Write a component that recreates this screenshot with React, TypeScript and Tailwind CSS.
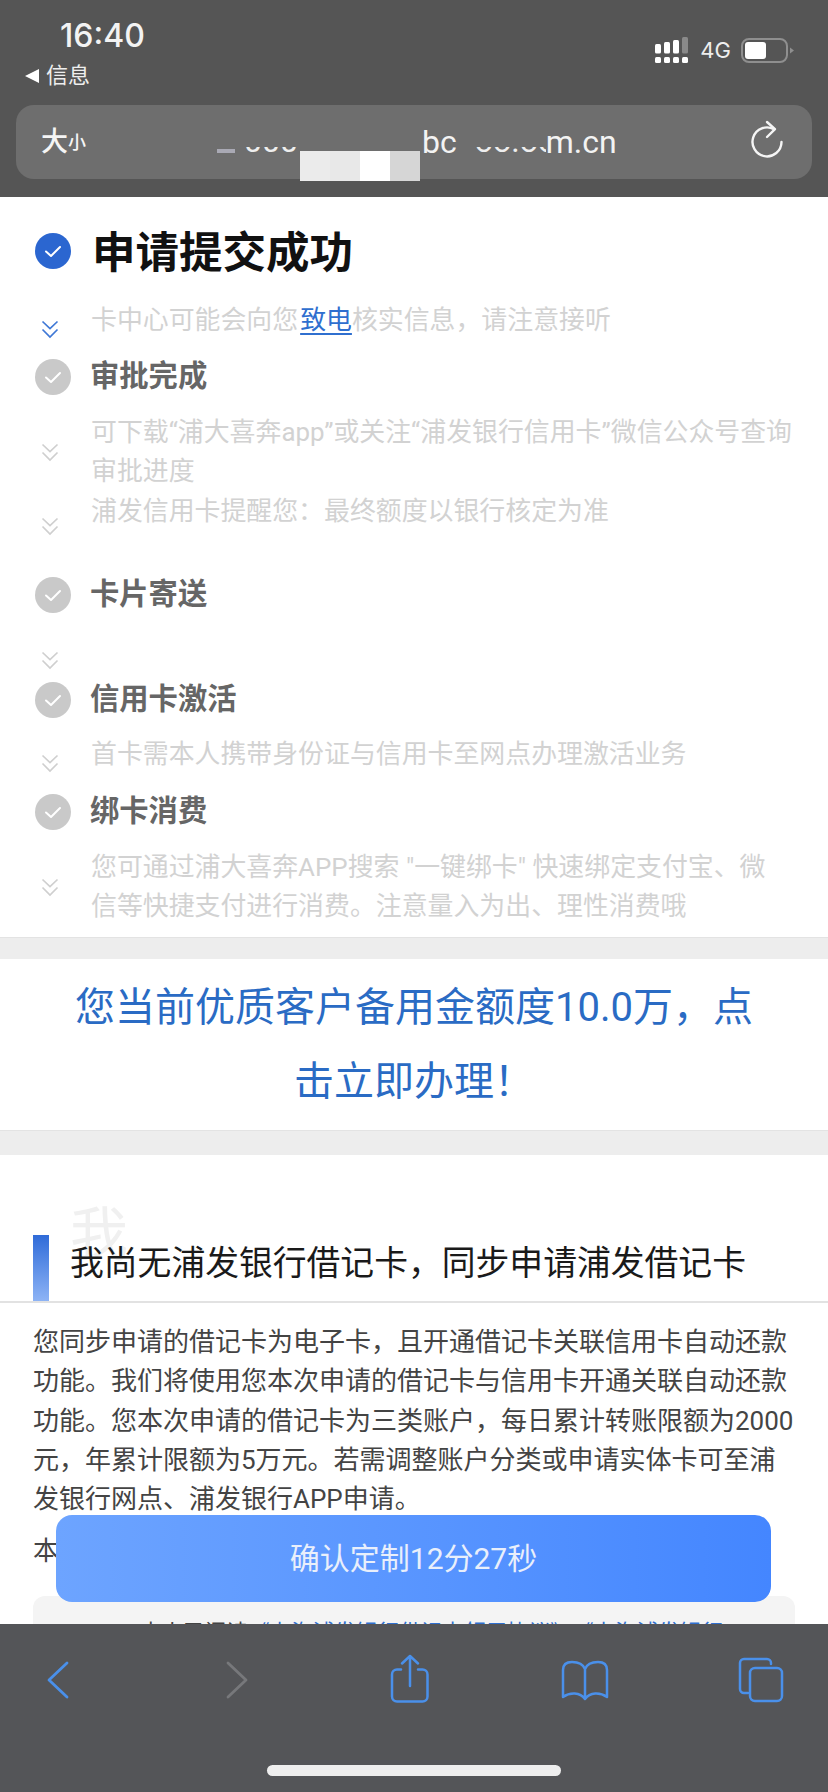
import React from "react";

const Check = ({ bg, size = 36 }: { bg: string; size?: number }) => (
  <svg width={size} height={size} viewBox="0 0 36 36" className="shrink-0">
    <circle cx="18" cy="18" r="18" fill={bg} />
    <path d="M11 18.500l5 4.500 9-9" fill="none" stroke="#fff" strokeWidth="2" strokeLinecap="round" strokeLinejoin="round" />
  </svg>
);

const Chev = ({ color = "#cfcfcf" }: { color?: string }) => (
  <svg width="18" height="19" viewBox="0 0 18 19" className="block">
    <path d="M1.500 1.500L9 8.500l7.500-7M1.500 9.500L9 17l7.500-7.500" fill="none" stroke={color} strokeWidth="1.700" />
  </svg>
);

const Title = ({ text, mt }: { text: string; mt: string }) => (
  <div className={`flex h-10 items-center pl-[35px] ${mt}`}>
    <Check bg="#c9c9c9" />
    <div className="ml-[19px] text-[29.300px] font-bold text-[#666666]">{text}</div>
  </div>
);

const Clipped = ({ text, className }: { text: string; className: string }) => (
  <div className={`h-[6px] overflow-hidden whitespace-nowrap ${className}`}>
    <div className="-mt-[22px] text-[32px] leading-[32px] text-[#eeeeee]">{text}</div>
  </div>
);

export default function App() {
  return (
    <div className="relative flex h-[1792px] w-[828px] flex-col overflow-hidden bg-white font-['Roboto','Noto_Sans_CJK_SC',sans-serif]">
      {/* Safari header */}
      <header className="relative z-10 h-[197px] shrink-0 bg-[#555555] px-4 text-white">
        <div className="flex h-[105px] justify-between">
          <div className="pl-[9px]">
            <div className="ml-[35px] pt-[15px] font-['Inter','Noto_Sans_CJK_SC',sans-serif] text-[32px] font-medium leading-[42px] text-[#f3f3f3]">16:40</div>
            <div className="mt-[7px] flex items-center gap-[7px] text-[22px] leading-[24px] text-[#eeeeee]">
              <span className="h-0 w-0 border-y-[7px] border-r-[14px] border-y-transparent border-r-white" />
              信息
            </div>
          </div>
          <div className="flex items-start pr-[17px] pt-[37px]">
            <svg width="34" height="26" viewBox="0 0 34 26" className="mr-[11px]">
              <g fill="#fff">
                <rect x="0" y="7" width="6" height="9.500" rx="1.500" />
                <rect x="9" y="5" width="6" height="11.500" rx="1.500" />
                <rect x="18" y="3" width="6" height="13.500" rx="1.500" />
                <rect x="0" y="20" width="6" height="6" rx="1.500" />
                <rect x="9" y="20" width="6" height="6" rx="1.500" />
                <rect x="18" y="20" width="6" height="6" rx="1.500" />
                <rect x="27" y="20" width="6" height="6" rx="1.500" />
              </g>
              <rect x="27" y="0" width="6" height="16.500" rx="1.500" fill="#8a8a8a" />
            </svg>
            <div className="mr-[10px] mt-[-3px] font-['Inter',sans-serif] text-[22px] leading-[32px] text-[#eeeeee]">4G</div>
            <svg width="54" height="26" viewBox="0 0 54 26">
              <rect x="1" y="2" width="45" height="23" rx="7" fill="none" stroke="#8f8f8f" strokeWidth="2" />
              <rect x="4" y="5" width="21" height="17" rx="3" fill="#fff" />
              <path d="M49 10.500l4 3-4 3z" fill="#8f8f8f" />
            </svg>
          </div>
        </div>
        <div className="relative flex h-[74px] items-center rounded-[18px] bg-[#6e6e6e] pl-[25px]">
          <span className="text-[27px] font-medium text-[#f5f5f5]">大</span>
          <span className="text-[18px] font-medium text-[#f5f5f5]">小</span>
          <div className="ml-[131px] mt-[18px] h-[4px] w-[18px] shrink-0 bg-[#a9a9b4]" />
          <Clipped text="000" className="ml-[9px] mt-[16px] w-[58px]" />
          <span className="ml-[120px] text-[32px] text-[#f3f3f3]">bc</span>
          <Clipped text="oo.oo" className="ml-[18px] mt-[16px] w-[71px]" />
          <span className="text-[32px] text-[#f3f3f3]">m.cn</span>
          <svg width="34" height="40" viewBox="0 0 34 40" className="absolute left-[734px] top-[15px]" fill="none" stroke="#f5f5f5" strokeWidth="2.400" strokeLinecap="round" strokeLinejoin="round">
            <path d="M31.500 22A14.500 14.500 0 1 1 24 9.200" />
            <path d="M17 2l8 7.200-8 7.800" />
          </svg>
          <div className="absolute left-[284px] top-[46px] flex h-[30px] w-[120px]">
            <span className="w-[30px] bg-[#ebebeb]" />
            <span className="w-[30px] bg-[#e8e8e8]" />
            <span className="w-[30px] bg-white" />
            <span className="w-[30px] bg-[#d6d6d6]" />
          </div>
        </div>
      </header>

      {/* Page */}
      <main className="relative min-h-0 flex-1 overflow-hidden bg-white">
        <section className="h-[741px] border-b border-[#e3e3e3] pt-[27px]">
          <div className="flex h-[54px] items-center pl-[35px]">
            <Check bg="#2b66d0" />
            <div className="ml-[21px] mt-[6px] text-[43.500px] font-bold leading-[54px] text-[#111111]">申请提交成功</div>
          </div>
          <div className="mt-[22px] flex h-10 items-center whitespace-nowrap">
            <div className="ml-[41px] mt-[18px] w-[50px]"><Chev color="#3f78d6" /></div>
            <div className="text-[25.900px] leading-10 text-[#d2d2d2]">
              卡中心可能会向您<span className="ml-[2px] text-[#2f6fcf] underline underline-offset-4">致电</span>核实信息，请注意接听
            </div>
          </div>
          <Title text="审批完成" mt="mt-[17px]" />
          <div className="mt-[15.500px] flex items-center whitespace-nowrap">
            <div className="ml-[41px] w-[50px]"><Chev /></div>
            <div className="text-[25.900px] leading-[39.500px] text-[#d2d2d2]">
              <div>可下载“浦大喜奔app”或关注“浦发银行信用卡”微信公众号查询</div>
              <div>审批进度</div>
            </div>
          </div>
          <div className="flex h-[39.500px] items-center whitespace-nowrap">
            <div className="ml-[41px] mt-[30px] w-[50px]"><Chev /></div>
            <div className="text-[25.900px] leading-[39.500px] text-[#d2d2d2]">浦发信用卡提醒您：最终额度以银行核定为准</div>
          </div>
          <Title text="卡片寄送" mt="mt-[44px]" />
          <div className="ml-[41px] mt-[36px] h-[19px]"><Chev /></div>
          <Title text="信用卡激活" mt="mt-[10px]" />
          <div className="mt-[15px] flex h-[39px] items-center whitespace-nowrap">
            <div className="ml-[41px] mt-[18px] w-[50px]"><Chev /></div>
            <div className="text-[25.900px] leading-[39px] text-[#d2d2d2]">首卡需本人携带身份证与信用卡至网点办理激活业务</div>
          </div>
          <Title text="绑卡消费" mt="mt-[18px]" />
          <div className="mt-[16px] flex items-center whitespace-nowrap">
            <div className="ml-[41px] w-[50px]"><Chev /></div>
            <div className="text-[25.900px] leading-[39px] text-[#d2d2d2]">
              <div>您可通过浦大喜奔APP搜索 "一键绑卡" 快速绑定支付宝、微</div>
              <div>信等快捷支付进行消费。注意量入为出、理性消费哦</div>
            </div>
          </div>
        </section>

        <div className="h-[21px] bg-[#ededed]" />
        <section className="flex h-[172px] flex-col items-center justify-center border-b border-[#e3e3e3] text-[40px] leading-[74px] text-[#2a6bc4]">
          <div>您当前优质客户备用金额度10.0万，点</div>
          <div>击立即办理！</div>
        </section>
        <div className="h-[24px] bg-[#ededed]" />

        <section className="relative">
          <div className="pl-[33px]">
            <div className="relative flex h-[146px] items-end">
              <div className="absolute left-[37px] top-[45px] text-[58px] leading-[70px] text-[#f0f0f0]">我</div>
              <div className="h-[66px] w-4 bg-gradient-to-b from-[#2f6bd8] to-[#8db3f5]" />
              <div className="relative mb-[15px] ml-[21px] whitespace-nowrap text-[33.800px] leading-[44px] text-[#1a1a1a]">我尚无浦发银行借记卡，同步申请浦发借记卡</div>
            </div>
          </div>
          <div className="h-[2px] bg-[#e2e2e2]" />
          <div className="whitespace-nowrap px-[33px] pt-[20px] text-[26px] leading-[39.300px] text-[#444444]">
            <div>您同步申请的借记卡为电子卡，且开通借记卡关联信用卡自动还款</div>
            <div>功能。我们将使用您本次申请的借记卡与信用卡开通关联自动还款</div>
            <div>功能。您本次申请的借记卡为三类账户，每日累计转账限额为2000</div>
            <div>元，年累计限额为5万元。若需调整账户分类或申请实体卡可至浦</div>
            <div>发银行网点、浦发银行APP申请。</div>
            <div className="mt-[13px]">本</div>
          </div>
          <div className="mx-[33px] mt-[24px] h-[60px] whitespace-nowrap rounded-[12px] bg-[#f4f4f4] pl-[107px] pt-[19px] text-[21.600px] leading-[36px] text-[#444444]">
            本人已阅读<span className="text-[#2f6fcf]">《上海浦发银行借记卡领用协议》、《上海浦发银行</span>
          </div>
        </section>

        <button className="absolute left-[56px] top-[1318px] flex h-[87px] w-[715px] items-center justify-center rounded-[16px] bg-gradient-to-r from-[#6da4ff] to-[#4486ff] text-[30px] text-[#e9effb]">
          确认定制12分27秒
        </button>
      </main>

      {/* Safari toolbar */}
      <footer className="relative z-10 flex h-[168px] shrink-0 flex-col bg-[#545558]">
        <div className="relative h-[90px]">
          <svg width="24" height="38" viewBox="0 0 24 38" className="absolute left-[46px] top-[37px]" fill="none" stroke="#4a90ea" strokeWidth="2.800" strokeLinecap="round" strokeLinejoin="round">
            <path d="M21 2L3 19l18 17" />
          </svg>
          <svg width="24" height="38" viewBox="0 0 24 38" className="absolute left-[225px] top-[37px]" fill="none" stroke="#77787b" strokeWidth="2.800" strokeLinecap="round" strokeLinejoin="round">
            <path d="M3 2l18 17L3 36" />
          </svg>
          <svg width="40" height="50" viewBox="0 0 40 50" className="absolute left-[390px] top-[30px]" fill="none" stroke="#4a90ea" strokeWidth="2.500" strokeLinecap="round" strokeLinejoin="round">
            <path d="M11 15.500H7a5 5 0 0 0-5 5V42.500a5 5 0 0 0 5 5H32.500a5 5 0 0 0 5-5V20.500a5 5 0 0 0-5-5H28" />
            <path d="M20 32V2M12 9.500L20 2l8 7.500" />
          </svg>
          <svg width="50" height="42" viewBox="0 0 50 42" className="absolute left-[560px] top-[36px]" fill="none" stroke="#4a90ea" strokeWidth="2.500" strokeLinecap="round" strokeLinejoin="round">
            <path d="M25 9C23 4 18 2 12 2 6 2 3 5 3 10v27c7-5 17-5 22 2 5-7 15-7 22-2V10c0-5-3-8-9-8-6 0-11 2-13 7zM25 9v29" />
          </svg>
          <svg width="46" height="46" viewBox="0 0 46 46" className="absolute left-[738px] top-[33px]" fill="none" stroke="#4a90ea" strokeWidth="2.500" strokeLinecap="round" strokeLinejoin="round">
            <path d="M33 7V6a4 4 0 0 0-4-4H6a4 4 0 0 0-4 4v26a4 4 0 0 0 4 4h4" />
            <rect x="12" y="11" width="32" height="33" rx="5" />
          </svg>
        </div>
        <div className="mx-auto mt-[51px] h-[11px] w-[294px] rounded-full bg-[#eeeeee]" />
      </footer>
    </div>
  );
}
